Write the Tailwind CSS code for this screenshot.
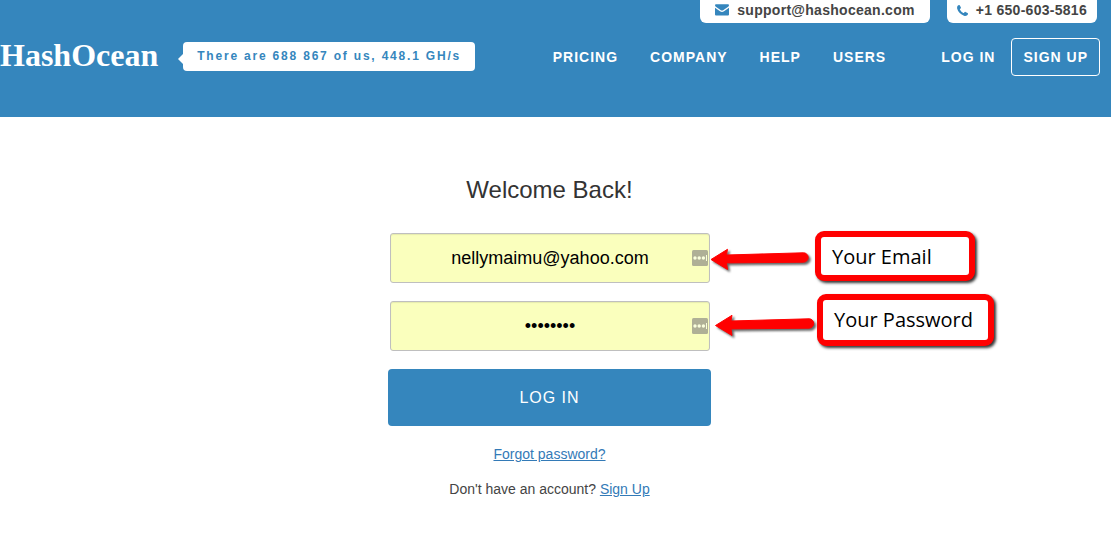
<!DOCTYPE html>
<html lang="en">
<head>
  <meta charset="UTF-8" />
  <meta name="viewport" content="width=device-width, initial-scale=1.0" />
  <title>HashOcean - Log in</title>
  <script src="https://cdn.jsdelivr.net/npm/@tailwindcss/browser@4"></script>
</head>
<body class="bg-white font-['Liberation_Sans',Arial,sans-serif] text-sm text-[#444] overflow-x-hidden">
  <header class="bg-[#3586bd] pr-[11px] pb-[41px]">
    <div class="flex justify-end gap-[17px] pr-[3px] font-bold tracking-[0.02em] leading-5">
      <a href="mailto:support@hashocean.com" class="flex items-center gap-2 bg-white rounded-b-md px-[15px] pb-[3px]">
        <svg class="w-[14px] h-[12px]" viewBox="0 0 14 12" fill="#3586bd">
          <path d="M0 1.3Q0 .3 1 .3H13Q14 .3 14 1.3 14 2.200 12.800 3L8.500 6Q7 7 5.500 6L1.200 3Q0 2.200 0 1.300Z" />
          <path d="M0 3.700 5 7.200Q7 8.600 9 7.200L14 3.700V10.500Q14 11.500 13 11.500H1Q0 11.500 0 10.500Z" />
        </svg>
        support@hashocean.com
      </a>
      <a href="tel:+16506035816" class="flex items-center gap-2 bg-white rounded-b-md px-[10px] pb-[3px]">
        <svg class="w-[11px] h-[11px]" viewBox="0 0 11 11" fill="#3586bd">
          <path d="M11 8.700Q11 9.900 9.900 10.500 8.600 11.200 7 10.700 4.500 9.900 2.700 8.100.900 6.300.300 4-.200 2.400.500 1.100 1.100 0 2.300 0 2.600 0 2.900.600L3.900 2.500Q4.100 2.900 3.800 3.300L3 4.100Q2.800 4.400 3 4.800 4.300 7 6.300 8 6.600 8.200 6.900 7.900L7.700 7Q8.100 6.700 8.500 6.900L10.500 8Q11 8.300 11 8.700Z" />
        </svg>
        +1 650-603-5816
      </a>
    </div>

    <div class="flex items-center mt-[15px]">
      <a href="#" class="font-['Liberation_Serif',serif] font-bold text-[32px] leading-[38px] text-white -mt-1">HashOcean</a>
      <div class="flex items-center ml-5 mb-px">
        <div class="border-y-[5px] border-y-transparent border-r-[5px] border-r-white mt-1"></div>
        <p class="bg-white rounded-sm text-[#3586bd] text-xs leading-[29px] font-bold tracking-[0.15em] px-[14px]">There are 688 867 of us, 448.1 GH/s</p>
      </div>
      <nav class="flex items-center ml-auto text-white font-bold tracking-[1px]">
        <div class="flex gap-8">
          <a href="#">PRICING</a>
          <a href="#">COMPANY</a>
          <a href="#">HELP</a>
          <a href="#">USERS</a>
        </div>
        <a href="#" class="ml-[55px]">LOG IN</a>
        <a href="#" class="ml-4 border border-white rounded-sm px-[11px] leading-9">SIGN UP</a>
      </nav>
    </div>
  </header>

  <main class="flex flex-col items-center pr-3 pt-[57px]">
    <h1 class="text-2xl text-[#333]">Welcome Back!</h1>
    <form id="loginForm" class="w-[323px] mt-[27px]">
      <div class="space-y-[18px] pl-[2px] pr-px">
        <div class="relative">
          <input type="email" id="email" value="nellymaimu@yahoo.com" class="block w-full h-[50px] bg-[#faffbd] border border-[#bfbfbf] rounded-[3px] text-lg text-black text-center shadow-[inset_0_1px_1px_rgba(0,0,0,0.08)]" />
          <svg class="absolute right-[2px] top-[17px] w-4 h-4" viewBox="0 0 16 16">
            <rect width="16" height="16" rx="1.500" fill="#afb096" />
            <g fill="#faffdd">
              <circle cx="3" cy="8" r="1.700" /><circle cx="7.200" cy="8" r="1.700" /><circle cx="11.400" cy="8" r="1.700" />
              <rect x="14" y="5" width="1" height="6" />
            </g>
          </svg>
          <svg class="absolute left-[318px] top-[7px] w-[110px] h-9 drop-shadow-[2px_2px_1px_rgba(0,0,0,0.6)]" viewBox="0 0 110 36" fill="#f00" stroke="#f00" stroke-linejoin="round">
            <path d="M3 19.500 19.500 9.300 18.500 15 95.500 12.800A4.700 4.700 0 0 1 95.500 22.200L18.500 22.900 19.500 29.500Z" />
          </svg>
          <label for="email" class="absolute left-[425px] -top-[2px] w-40 h-[50px] bg-white border-6 border-[#f00] rounded-[9px] pl-[11px] leading-10 font-['Open_Sans','Noto_Sans',sans-serif] text-xl text-black whitespace-nowrap shadow-[2px_2px_3px_rgba(0,0,0,0.8)]">Your Email</label>
        </div>
        <div class="relative">
          <input type="password" id="password" value="password" class="block w-full h-[50px] bg-[#faffbd] border border-[#bfbfbf] rounded-[3px] text-lg text-black text-center shadow-[inset_0_1px_1px_rgba(0,0,0,0.08)]" />
          <svg class="absolute right-[2px] top-[17px] w-4 h-4" viewBox="0 0 16 16">
            <rect width="16" height="16" rx="1.500" fill="#afb096" />
            <g fill="#faffdd">
              <circle cx="3" cy="8" r="1.700" /><circle cx="7.200" cy="8" r="1.700" /><circle cx="11.400" cy="8" r="1.700" />
              <rect x="14" y="5" width="1" height="6" />
            </g>
          </svg>
          <svg class="absolute left-[322px] top-[5px] w-[110px] h-9 drop-shadow-[2px_2px_1px_rgba(0,0,0,0.6)]" viewBox="0 0 110 36" fill="#f00" stroke="#f00" stroke-linejoin="round">
            <path d="M3.500 19.500 20 9.300 19 15 97 12.800A4.700 4.700 0 0 1 97 22.200L19 22.900 20 29.500Z" />
          </svg>
          <label for="password" class="absolute left-[427px] -top-[7px] w-[177px] h-[52px] bg-white border-6 border-[#f00] rounded-[9px] pl-[11px] leading-10 font-['Open_Sans','Noto_Sans',sans-serif] text-xl text-black whitespace-nowrap shadow-[2px_2px_3px_rgba(0,0,0,0.8)]">Your Password</label>
        </div>
      </div>
      <button type="submit" class="block w-full h-[57px] mt-[18px] bg-[#3586bd] rounded-sm text-white text-base tracking-[1px]">LOG IN</button>
    </form>
    <p class="mt-[18px]"><a href="#" class="text-[#337ab7] underline">Forgot password?</a></p>
    <p class="mt-[15px]">Don't have an account? <a href="#" class="text-[#337ab7] underline">Sign Up</a></p>
  </main>
</body>
</html>
